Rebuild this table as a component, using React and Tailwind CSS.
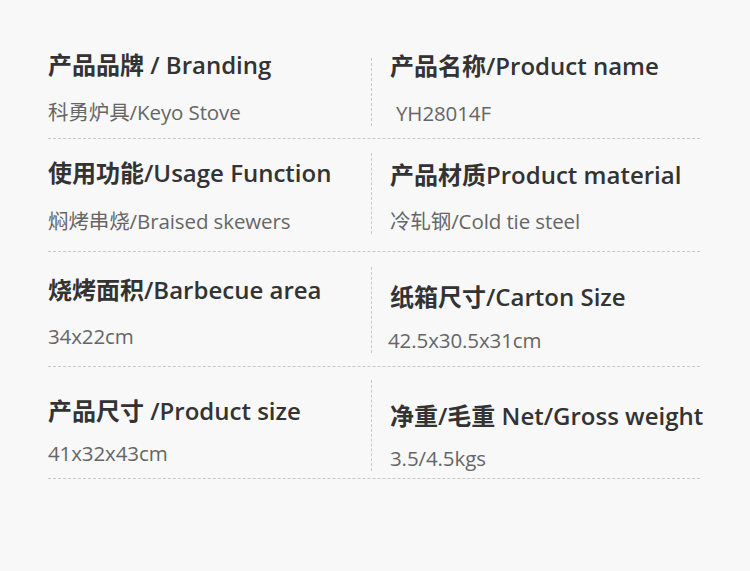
import React from 'react';

// per-row offsets read off the reference (they aren't perfectly regular)
const specs = [
  {
    h: 'h-[113px]',
    left: { title: '产品品牌 / Branding', value: '科勇炉具/Keyo Stove', pt: 'pt-[24px]', mt: 'mt-[19px]' },
    divider: 'mt-[32px] mb-[14px]',
    right: { title: '产品名称/Product name', value: 'YH28014F', pt: '-mt-[7px]', mt: 'mt-[19px]', nudge: 'pl-[6px]' },
  },
  {
    h: 'h-[113px]',
    left: { title: '使用功能/Usage Function', value: '焖烤串烧/Braised skewers', pt: 'pt-[19px]', mt: 'mt-[20px]' },
    divider: 'mt-[14px] mb-[20px]',
    right: { title: '产品材质Product material', value: '冷轧钢/Cold tie steel', pt: 'pt-[7px]', mt: 'mt-[18px]' },
  },
  {
    h: 'h-[115px]',
    left: { title: '烧烤面积/Barbecue area', value: '34x22cm', pt: 'pt-[23px]', mt: 'mt-[18px]' },
    divider: 'mt-[15px] mb-[15px]',
    right: { title: '纸箱尺寸/Carton Size', value: '42.5x30.5x31cm', pt: 'pt-[15px]', mt: 'mt-[15px]', nudge: '-ml-[2px]' },
  },
  {
    h: 'h-[112px]',
    left: { title: '产品尺寸 /Product size', value: '41x32x43cm', pt: 'pt-[29px]', mt: 'mt-[14px]' },
    divider: 'mt-[13px] mb-[12px]',
    right: { title: '净重/毛重 Net/Gross weight', value: '3.5/4.5kgs', pt: 'pt-[21px]', mt: 'mt-[14px]' },
  },
];

const font = { fontFamily: '"Open Sans", "Noto Sans CJK SC", sans-serif' };

const Cell = ({ item }) => (
  <div className={item.pt}>
    <div className="text-[24px] font-semibold leading-[30px] text-[#333333] tracking-[0px] whitespace-nowrap">
      {item.title}
    </div>
    <div className={`${item.mt} ${item.nudge || ''} text-[20.5px] leading-[26px] text-[#666666] tracking-[-0.1px] whitespace-nowrap`}>
      {item.value}
    </div>
  </div>
);

export default function App() {
  return (
    <div className="min-h-[571px] w-[750px] bg-[#f8f8f8] pt-[26px]" style={font}>
      <div className="ml-[48px] w-[652px]">
        {specs.map((row, i) => (
          <div key={i} className={`flex ${row.h} border-b border-dashed border-[#c8c8c8]`}>
            {/* left spec */}
            <div className="w-[323px] shrink-0">
              <Cell item={row.left} />
            </div>
            {/* right spec, divider only spans part of the row */}
            <div className="flex min-w-0 flex-1 flex-col">
              <div className={`flex-1 ${row.divider} border-l border-dashed border-[#c8c8c8] pl-[18px]`}>
                <Cell item={row.right} />
              </div>
            </div>
          </div>
        ))}
      </div>
    </div>
  );
}
